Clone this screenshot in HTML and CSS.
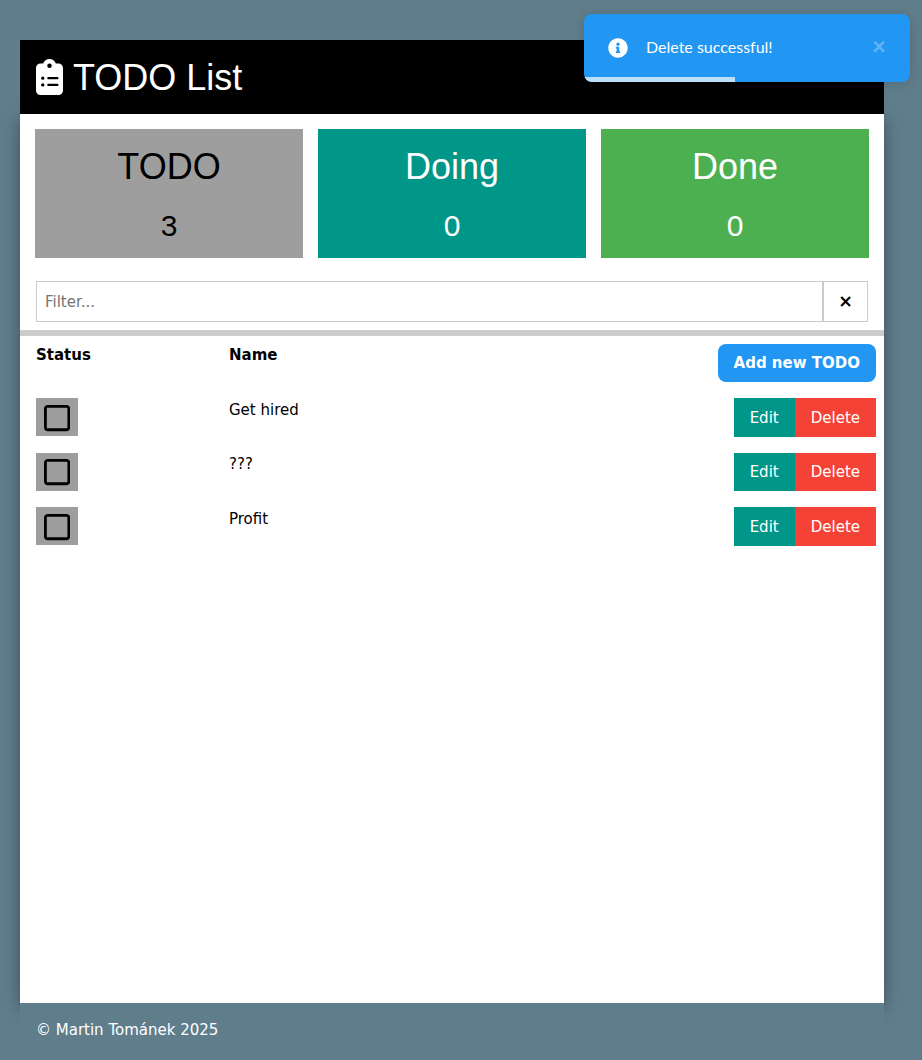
FILE: index.html
```html
<!DOCTYPE html>
<html lang="en">
<head>
<meta charset="utf-8">
<title>TODO List</title>
<link rel="stylesheet" href="styles.css">
</head>
<body>
<div class="page">
  <header class="header">
    <svg class="logo" viewBox="0 0 384 512"><path fill="currentColor" d="M192 0c-41.800 0-77.400 26.700-90.500 64H64C28.700 64 0 92.700 0 128V448c0 35.300 28.700 64 64 64H320c35.300 0 64-28.700 64-64V128c0-35.300-28.700-64-64-64H282.500C269.400 26.700 233.800 0 192 0zm0 64a32 32 0 1 1 0 64 32 32 0 1 1 0-64zM72 272a24 24 0 1 1 48 0 24 24 0 1 1 -48 0zm104-16H304c8.800 0 16 7.200 16 16s-7.200 16-16 16H176c-8.800 0-16-7.200-16-16s7.200-16 16-16zM72 368a24 24 0 1 1 48 0 24 24 0 1 1 -48 0zm88 0c0-8.800 7.200-16 16-16H304c8.800 0 16 7.200 16 16s-7.200 16-16 16H176c-8.800 0-16-7.200-16-16z"/></svg>
    <h1 class="title">TODO List</h1>
  </header>
  <main class="main">
    <section class="tiles">
      <div class="tile tile-todo"><h1 class="tile-name">TODO</h1><h2 class="tile-count">3</h2></div>
      <div class="tile tile-doing"><h1 class="tile-name">Doing</h1><h2 class="tile-count">0</h2></div>
      <div class="tile tile-done"><h1 class="tile-name">Done</h1><h2 class="tile-count">0</h2></div>
    </section>
    <div class="filter">
      <input class="filter-input" type="text" placeholder="Filter...">
      <button class="filter-clear">×</button>
    </div>
    <div class="list">
      <div class="row row-head"><span>Status</span><span>Name</span><div class="actions"><button class="btn btn-add">Add new TODO</button></div></div>
      <div class="row">
        <button class="status" aria-label="Todo"><svg class="square" viewBox="0 0 448 512"><path d="M384 80c8.800 0 16 7.200 16 16l0 320c0 8.800-7.200 16-16 16L64 432c-8.800 0-16-7.200-16-16L48 96c0-8.800 7.200-16 16-16l320 0zM64 32C28.700 32 0 60.700 0 96L0 416c0 35.300 28.700 64 64 64l320 0c35.300 0 64-28.700 64-64l0-320c0-35.300-28.700-64-64-64L64 32z"/></svg></button>
        <span class="name">Get hired</span>
        <div class="actions"><button class="btn btn-edit">Edit</button><button class="btn btn-delete">Delete</button></div>
      </div>
      <div class="row">
        <button class="status" aria-label="Todo"><svg class="square" viewBox="0 0 448 512"><path d="M384 80c8.800 0 16 7.200 16 16l0 320c0 8.800-7.200 16-16 16L64 432c-8.800 0-16-7.200-16-16L48 96c0-8.800 7.200-16 16-16l320 0zM64 32C28.700 32 0 60.700 0 96L0 416c0 35.300 28.700 64 64 64l320 0c35.300 0 64-28.700 64-64l0-320c0-35.300-28.700-64-64-64L64 32z"/></svg></button>
        <span class="name">???</span>
        <div class="actions"><button class="btn btn-edit">Edit</button><button class="btn btn-delete">Delete</button></div>
      </div>
      <div class="row">
        <button class="status" aria-label="Todo"><svg class="square" viewBox="0 0 448 512"><path d="M384 80c8.800 0 16 7.200 16 16l0 320c0 8.800-7.200 16-16 16L64 432c-8.800 0-16-7.200-16-16L48 96c0-8.800 7.200-16 16-16l320 0zM64 32C28.700 32 0 60.700 0 96L0 416c0 35.300 28.700 64 64 64l320 0c35.300 0 64-28.700 64-64l0-320c0-35.300-28.700-64-64-64L64 32z"/></svg></button>
        <span class="name">Profit</span>
        <div class="actions"><button class="btn btn-edit">Edit</button><button class="btn btn-delete">Delete</button></div>
      </div>
    </div>
  </main>
  <footer class="footer">© Martin Tománek 2025</footer>
</div>
<div class="toast" role="alert">
  <svg class="toast-icon" viewBox="0 0 512 512"><path fill="currentColor" d="M256 8C119.043 8 8 119.083 8 256c0 136.997 111.043 248 248 248s248-111.003 248-248C504 119.083 392.957 8 256 8zm0 110c23.196 0 42 18.804 42 42s-18.804 42-42 42-42-18.804-42-42 18.804-42 42-42zm56 254c0 6.627-5.373 12-12 12h-88c-6.627 0-12-5.373-12-12v-24c0-6.627 5.373-12 12-12h12v-64h-12c-6.627 0-12-5.373-12-12v-24c0-6.627 5.373-12 12-12h64c6.627 0 12 5.373 12 12v100h12c6.627 0 12 5.373 12 12v24z"/></svg>
  <span class="toast-text">Delete successful!</span>
  <button class="toast-close">×</button>
  <div class="toast-progress"></div>
</div>
</body>
</html>
```
FILE: styles.css
```css
* { box-sizing: border-box; }
body {
  margin: 0;
  background: #607d8b;
  font: 15px/1.5 Verdana, "DejaVu Sans", sans-serif;
  color: #000;
}
button { font: inherit; border: 0; margin: 0; }
h1, h2 {
  font-family: "Liberation Sans", Arial, sans-serif;
  font-weight: 400;
  line-height: 1.5;
  margin: 0;
}
.page {
  display: flex;
  flex-direction: column;
  width: 864px;
  height: 1060px;
  margin-left: 20px;
  padding-top: 40px;
}
.header {
  position: relative;
  z-index: 1;
  display: flex;
  align-items: center;
  gap: 10px;
  height: 74px;
  padding: 0 16px;
  background: #000;
  color: #fff;
}
.logo { width: 27px; height: 36px; margin-bottom: 1px; }
.title { font-size: 36px; padding-top: 2px; }
.main {
  height: 889px;
  background: #fff;
  box-shadow: 0 4px 10px 0 rgba(0, 0, 0, .2), 0 4px 20px 0 rgba(0, 0, 0, .19);
}
.tiles {
  display: grid;
  grid-template-columns: repeat(3, 1fr);
  gap: 15px;
  padding: 15px;
}
.tile {
  display: flex;
  flex-direction: column;
  gap: 9px;
  padding: 11px 0 10px;
  text-align: center;
  color: #fff;
}
.tile-todo { background: #9e9e9e; color: #000; }
.tile-doing { background: #009688; }
.tile-done { background: #4caf50; }
.tile-name { font-size: 36px; }
.tile-count { font-size: 30px; }
.filter {
  display: flex;
  height: 62.5px;
  padding: 8px 16px;
  border-bottom: 6px solid #ccc;
}
.filter-input {
  flex: 1;
  min-width: 0;
  height: 40.5px;
  padding: 9px 8px 7px;
  border: 1px solid #ccc;
  border-radius: 0;
  font: inherit;
}
.filter-input::placeholder { color: #757575; }
.filter-clear {
  width: 45px;
  height: 40.5px;
  padding: 0;
  background: #fff;
  border: 1px solid #ccc;
  font-size: 17.5px;
  font-weight: 700;
  color: #000;
}
.row {
  display: grid;
  grid-template-columns: 193px 1fr auto;
  align-items: start;
  height: 54.5px;
  padding: 8px 8px 8px 16px;
}
.row-head { height: 54.9px; font-weight: 700; }
.actions { display: flex; }
.name { padding-top: .3px; }
.btn {
  height: 38.5px;
  padding: 8px 16px;
  line-height: 22.5px;
  color: #fff;
}
.btn-add { background: #2196f3; border-radius: 8px; font-weight: 700; }
.btn-edit, .btn-delete { padding: 8.3px 16px 7.7px; }
.btn-edit { background: #009688; }
.btn-delete { background: #f44336; }
.status {
  display: flex;
  align-items: center;
  justify-content: center;
  width: 42.25px;
  height: 38px;
  padding: .6px 0 0;
  background: #9e9e9e;
}
.square { width: 26.25px; height: 30px; flex: none; }
.footer {
  position: relative;
  flex: 1;
  padding: 16px;
  background: #607d8b;
  color: #fff;
}
.toast {
  position: absolute;
  z-index: 2;
  top: 14px;
  left: 584px;
  display: flex;
  align-items: center;
  width: 326px;
  height: 68px;
  padding: 0 24px;
  overflow: hidden;
  border-radius: 8px;
  background: #2196f3;
  color: #fff;
  font: 16px/24px Lato, sans-serif;
  box-shadow: 0 1px 10px 0 rgba(0, 0, 0, .1), 0 2px 15px 0 rgba(0, 0, 0, .05);
}
.toast-icon { width: 20px; height: 20px; margin-right: 18px; }
.toast-text { flex: 1; margin-bottom: 2px; }
.toast-close {
  padding: 0;
  margin-bottom: 4px;
  background: none;
  color: #fff;
  font-weight: 700;
  font-size: 24px;
  line-height: 24px;
  opacity: .3;
}
.toast-progress {
  position: absolute;
  left: 0;
  bottom: 0;
  width: 151px;
  height: 5px;
  background: rgba(255, 255, 255, .7);
}
```
